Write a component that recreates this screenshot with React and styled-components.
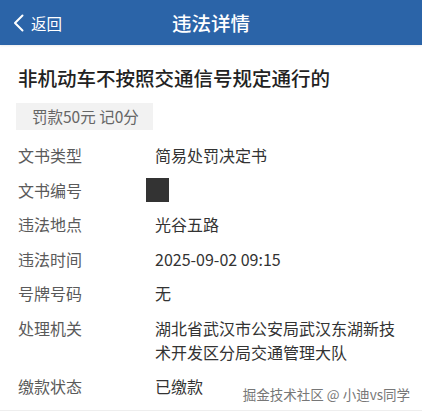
import React from 'react';
import styled, { createGlobalStyle } from 'styled-components';

const GlobalStyle = createGlobalStyle`
    html, body {
        margin: 0;
        padding: 0;
        background: #ffffff;
    }
    body {
        font-family: "Noto Sans CJK SC", "Noto Sans", sans-serif;
    }
`

const Page = styled.div`
    position: relative;
    width: 422px;
    height: 413px;
    overflow: hidden;
    background: #fff;
`

const Header = styled.header`
    height: 45px;
    background-color: #2b64a8;
    display: grid;
    grid-template-columns: 1fr auto 1fr;
    align-items: center;
    color: #fff;
    box-shadow: 0 1px 2px rgba(0, 0, 0, 0.08);
`

const Back = styled.div`
    display: flex;
    align-items: center;
    gap: 6px;
    padding-left: 12px;
    font-size: 15.5px;

    svg {
        width: 13px;
        height: 18px;
    }
`

const Title = styled.h1`
    margin: 0;
    font-size: 19.5px;
    font-weight: 500;
    letter-spacing: 0;
`

const Content = styled.div`
    padding: 0 18px;
    height: 366px;
    border-bottom: 1px solid #eeeeee;
    box-sizing: border-box;
`

const Headline = styled.h2`
    margin: 0;
    padding-top: 19px;
    font-size: 19.5px;
    line-height: 28px;
    font-weight: 500;
    color: #222;
`

const Tag = styled.div`
    display: inline-block;
    margin-top: 11px;
    margin-left: -2px;
    padding: 0 14px 0 16px;
    height: 27px;
    line-height: 27px;
    background: #f2f2f2;
    color: #666;
    font-size: 15.5px;
`

const Rows = styled.div`
    display: flex;
    flex-direction: column;
    gap: 10.5px;
    margin-top: 13px;
`

const Row = styled.div`
    display: flex;
    font-size: 16px;
    line-height: 24px;
`

const Label = styled.div`
    width: 137px;
    flex-shrink: 0;
    color: #5a5a5a;
`

const Value = styled.div`
    color: #333;
    width: 242px;
`

const Redact = styled.span`
    display: block;
    width: 23px;
    height: 24px;
    margin-left: -9px;
    background: #333;
`

const Watermark = styled.div`
    position: absolute;
    right: 12px;
    top: 384px;
    font-size: 13.5px;
    line-height: 20px;
    color: #777;
    text-shadow: 0 0 1px rgba(255, 255, 255, 0.8);
`

const rows = [
    ['文书类型', '简易处罚决定书'],
    ['文书编号', null],
    ['违法地点', '光谷五路'],
    ['违法时间', '2025-09-02 09:15'],
    ['号牌号码', '无'],
    ['处理机关', '湖北省武汉市公安局武汉东湖新技术开发区分局交通管理大队'],
    ['缴款状态', '已缴款'],
]

function App() {
    return (
        <Page>
            <GlobalStyle />
            <Header>
                <Back>
                    <svg viewBox="0 0 13 18" fill="none">
                        <path d="M10.5 1.5 L3 9 L10.5 16.5" stroke="#fff" strokeWidth="2" strokeLinecap="round" strokeLinejoin="round" />
                    </svg>
                    <span>返回</span>
                </Back>
                <Title>违法详情</Title>
                <div />
            </Header>
            <Content>
                <Headline>非机动车不按照交通信号规定通行的</Headline>
                <Tag>罚款50元 记0分</Tag>
                <Rows>
                    {rows.map(([label, value]) => (
                        <Row key={label}>
                            <Label>{label}</Label>
                            <Value>{value === null ? <Redact /> : value}</Value>
                        </Row>
                    ))}
                </Rows>
            </Content>
            <Watermark>掘金技术社区 @ 小迪vs同学</Watermark>
        </Page>
    );
};
export default App;
